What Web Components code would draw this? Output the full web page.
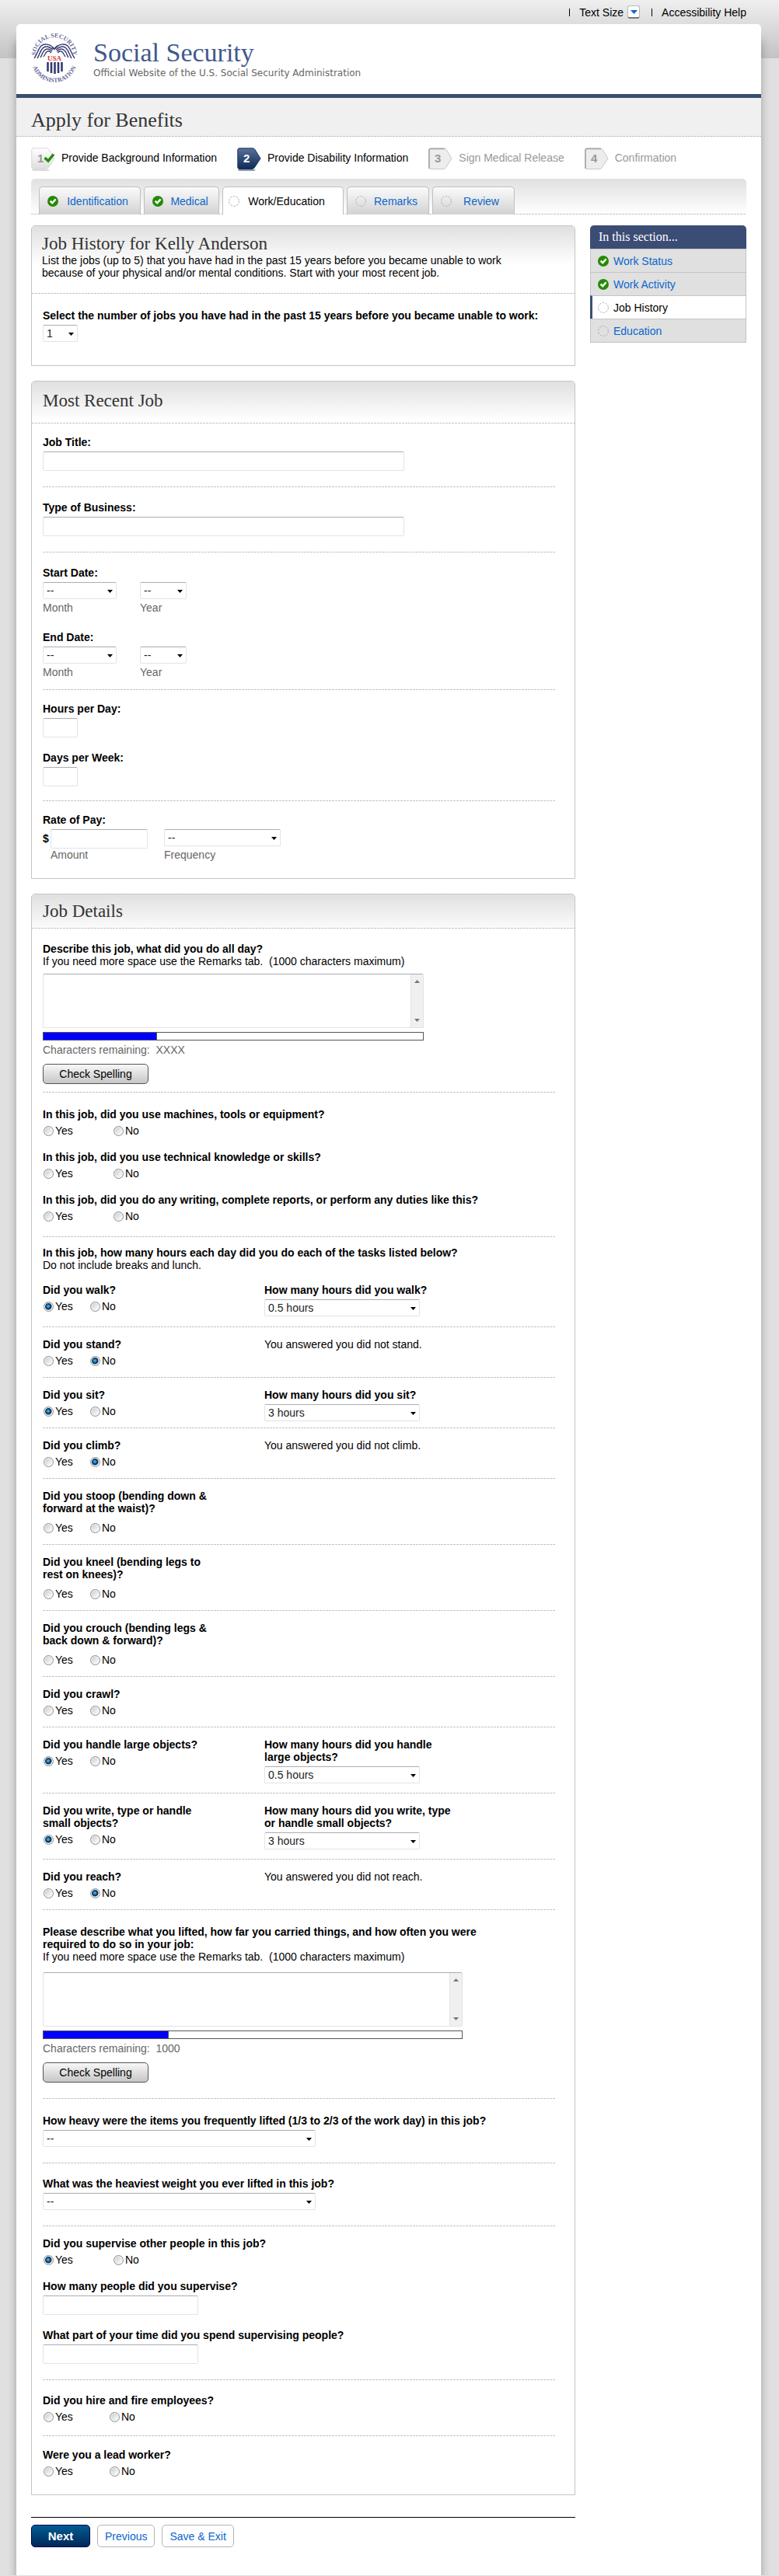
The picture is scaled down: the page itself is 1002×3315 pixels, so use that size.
<!DOCTYPE html>
<html lang="en">
<head>
<meta charset="utf-8">
<title>Apply for Benefits - Job History</title>
<style>
    body
    {
        margin: 0;
        font: 14px/16px "Liberation Sans", Arial, sans-serif;
        color: #000;
        background: linear-gradient(#efefef, #c3c3c3) 0 0 / 100% 75px no-repeat #e0e0e0;

        --serif: "Liberation Serif", Georgia, serif;
        --navy: #3b4c75;
        --link: #0a66cc;
        --line: #c4c4c4;
        --dashes: repeating-linear-gradient(90deg, #c4c4c4 0 3px, transparent 3px 4px);
    }
</style>
</head>
<body>

<page-tools></page-tools>

<page-card>
    <site-header slot="header" name="Social Security" tagline="Official Website of the U.S. Social Security Administration"></site-header>
    <page-title slot="header">Apply for Benefits</page-title>

    <step-list slot="nav">
        <step-item num="1" state="done">Provide Background Information</step-item>
        <step-item num="2" state="current">Provide Disability Information</step-item>
        <step-item num="3" state="todo">Sign Medical Release</step-item>
        <step-item num="4" state="todo">Confirmation</step-item>
    </step-list>

    <tab-bar slot="nav">
        <tab-item done style="width: 131px">Identification</tab-item>
        <tab-item done style="width: 97px">Medical</tab-item>
        <tab-item active style="width: 156px">Work/Education</tab-item>
        <tab-item style="width: 106px">Remarks</tab-item>
        <tab-item style="width: 106px">Review</tab-item>
    </tab-bar>

    <form-panel heading="Job History for Kelly Anderson" size="intro">
        <span slot="intro">List the jobs (up to 5) that you have had in the past 15 years before you became unable to work<br>because of your physical and/or mental conditions. Start with your most recent job.</span>
        <form-group style="--pad: 20px 0 30px">
            <select-field label="Select the number of jobs you have had in the past 15 years before you became unable to work:" value="1" width="45"></select-field>
        </form-group>
    </form-panel>

    <form-panel heading="Most Recent Job" size="tall">
        <form-group style="--pad: 16px 0 20px">
            <text-field label="Job Title:" width="465"></text-field>
        </form-group>
        <form-group style="--pad: 18px 0 20px">
            <text-field label="Type of Business:" width="465"></text-field>
        </form-group>
        <form-group style="--pad: 18px 0 14px; --gap: 22px">
            <date-field label="Start Date:"></date-field>
            <date-field label="End Date:"></date-field>
        </form-group>
        <form-group style="--pad: 16px 0 18px; --gap: 18px">
            <text-field label="Hours per Day:" width="45"></text-field>
            <text-field label="Days per Week:" width="45"></text-field>
        </form-group>
        <form-group style="--pad: 16px 0 22px">
            <pay-field label="Rate of Pay:"></pay-field>
        </form-group>
    </form-panel>

    <form-panel heading="Job Details">
        <form-group style="--pad: 18px 0 10px">
            <essay-field label="Describe this job, what did you do all day?" remaining="XXXX" width="490"></essay-field>
        </form-group>
        <form-group style="--pad: 20px 0 18px; --gap: 18px">
            <radio-field label="In this job, did you use machines, tools or equipment?"></radio-field>
            <radio-field label="In this job, did you use technical knowledge or skills?"></radio-field>
            <radio-field label="In this job, did you do any writing, complete reports, or perform any duties like this?"></radio-field>
        </form-group>

        <task-intro>
            In this job, how many hours each day did you do each of the tasks listed below?
            <span slot="note">Do not include breaks and lunch.</span>
        </task-intro>
        <task-row first>
            <radio-field compact label="Did you walk?" value="Yes"></radio-field>
            <select-field slot="answer" label="How many hours did you walk?" value="0.5 hours" width="200"></select-field>
        </task-row>
        <task-row>
            <radio-field compact label="Did you stand?" value="No"></radio-field>
            <span slot="answer">You answered you did not stand.</span>
        </task-row>
        <task-row>
            <radio-field compact label="Did you sit?" value="Yes"></radio-field>
            <select-field slot="answer" label="How many hours did you sit?" value="3 hours" width="200"></select-field>
        </task-row>
        <task-row>
            <radio-field compact label="Did you climb?" value="No"></radio-field>
            <span slot="answer">You answered you did not climb.</span>
        </task-row>
        <task-row lines="2">
            <radio-field compact label="Did you stoop (bending down &amp; forward at the waist)?"></radio-field>
        </task-row>
        <task-row lines="2">
            <radio-field compact label="Did you kneel (bending legs to rest on knees)?"></radio-field>
        </task-row>
        <task-row lines="2">
            <radio-field compact label="Did you crouch (bending legs &amp; back down &amp; forward)?"></radio-field>
        </task-row>
        <task-row>
            <radio-field compact label="Did you crawl?"></radio-field>
        </task-row>
        <task-row lines="2" style="--radio-gap: 5px">
            <radio-field compact label="Did you handle large objects?" value="Yes"></radio-field>
            <select-field slot="answer" label="How many hours did you handle large objects?" value="0.5 hours" width="200"></select-field>
        </task-row>
        <task-row lines="2" style="--radio-gap: 5px">
            <radio-field compact label="Did you write, type or handle small objects?" value="Yes"></radio-field>
            <select-field slot="answer" label="How many hours did you write, type or handle small objects?" value="3 hours" width="200"></select-field>
        </task-row>
        <task-row>
            <radio-field compact label="Did you reach?" value="No"></radio-field>
            <span slot="answer">You answered you did not reach.</span>
        </task-row>

        <form-group style="--pad: 20px 0; --box-gap: 12px">
            <essay-field label="Please describe what you lifted, how far you carried things, and how often you were required to do so in your job:" remaining="1000" width="540"></essay-field>
        </form-group>
        <form-group style="--pad: 20px 0">
            <select-field label="How heavy were the items you frequently lifted (1/3 to 2/3 of the work day) in this job?" value="--" width="351"></select-field>
        </form-group>
        <form-group style="--pad: 18px 0 20px">
            <select-field label="What was the heaviest weight you ever lifted in this job?" value="--" width="351"></select-field>
        </form-group>
        <form-group style="--pad: 14px 0 20px; --gap: 18px">
            <radio-field label="Did you supervise other people in this job?" value="Yes"></radio-field>
            <text-field label="How many people did you supervise?" width="200"></text-field>
            <text-field label="What part of your time did you spend supervising people?" width="200"></text-field>
        </form-group>
        <form-group style="--pad: 18px 0 16px; --radio-column: 85px">
            <radio-field label="Did you hire and fire employees?"></radio-field>
        </form-group>
        <form-group style="--pad: 16px 0 22px; --radio-column: 85px">
            <radio-field label="Were you a lead worker?"></radio-field>
        </form-group>
    </form-panel>

    <form-actions></form-actions>

    <side-nav slot="aside" heading="In this section...">
        <side-item done>Work Status</side-item>
        <side-item done>Work Activity</side-item>
        <side-item active>Job History</side-item>
        <side-item>Education</side-item>
    </side-nav>
</page-card>

<script>

const BASE_CSS = `
    :host, *, *::before, *::after { box-sizing: border-box; }
    :host { display: block; }
    a { color: var(--link); text-decoration: none; }
    input, select, textarea, button { font: inherit; color: inherit; margin: 0; }
`;

const FIELD_CSS = `
    .label { display: block; font-weight: bold; margin-bottom: 4px; }
    .hint { display: block; color: #666; }
    input[type=text], select, textarea
    {
        display: block;
        border: 1px solid #e2e3ea;
        border-top-color: #abadb3;
        border-radius: 2px;
        background: #fff;
        max-width: 100%;
    }
    input[type=text] { height: 25px; padding: 0 4px; }
    .select { display: grid; max-width: 100%; align-items: center; }
    .select > * { grid-area: 1 / 1; }
    .select svg { justify-self: end; margin: 1px 5px 0 0; pointer-events: none; }
    select { appearance: none; width: 100%; height: 22px; padding: 0 16px 0 4px; color: #222; }
`;

const CHECK_ICON = `<svg width="14" height="14" viewBox="0 0 14 14" aria-hidden="true">
    <circle cx="7" cy="7" r="7" fill="#258a05"/>
    <path d="M3.6 6.6 6.2 9.2 10.6 4.4" fill="none" stroke="#fff" stroke-width="2.4"/>
</svg>`;

const EMPTY_ICON = `<svg width="14" height="14" viewBox="0 0 14 14" aria-hidden="true">
    <circle cx="7" cy="7" r="6.4" fill="none" stroke="#b0b0b0" stroke-dasharray="2.6 1.4"/>
</svg>`;


/**
 * Shared base: puts css() and html() of the subclass in an open shadow root.
 */
class BaseElement extends HTMLElement
{
    connectedCallback()
    {
        if(this.shadowRoot) return;
        this.attachShadow({mode: 'open'}).innerHTML = `<style>${BASE_CSS}${this.css()}</style>${this.html()}`;
    }

    attr(name)
    {
        return (this.getAttribute(name) || '').replace(/&/g, '&amp;');
    }

    css() { return ''; }

    html() { return '<slot></slot>'; }
}


function selectBox(id, value, width)
{
    return `<div class="select" style="width:${width}px">
        <select id="${id}"><option>${value}</option></select>
        <svg width="7" height="4" viewBox="0 0 7 4" aria-hidden="true"><path d="M0 0h7L3.5 4z"/></svg>
    </div>`;
}



// PAGE FRAME

class PageTools extends BaseElement
{
    css()
    {
        return `
            nav { display: flex; justify-content: flex-end; align-items: center; height: 31px; padding-right: 42px; }
            i { width: 1px; height: 10px; background: #000; margin: 0 12px 0 15px; }
            a { color: #000; }
            button
            {
                display: grid;
                place-items: center;
                width: 16px;
                height: 17px;
                margin-left: 5px;
                padding: 0;
                border: 1px solid #b9b9b9;
                border-bottom: 2px solid #777;
                border-radius: 3px;
                background: #fff;
            }
        `;
    }

    html()
    {
        return `<nav aria-label="Page tools">
            <i></i><a href="#">Text Size</a>
            <button type="button" aria-label="Choose text size"><svg width="9" height="5" viewBox="0 0 9 5"><path d="M0 0h9L4.5 5z" fill="#0a66cc"/></svg></button>
            <i></i><a href="#">Accessibility Help</a>
        </nav>`;
    }
}
customElements.define('page-tools', PageTools);


class PageCard extends BaseElement
{
    css()
    {
        return `
            :host
            {
                margin: 0 23px 0 21px;
                padding-bottom: 36px;
                background: #fff;
                border-radius: 5px 5px 0 0;
                box-shadow: 0 20px 12px rgba(0, 0, 0, .3);
            }
            .nav { padding: 0 19px; }
            .columns { display: grid; grid-template-columns: minmax(0, 1fr) 201px; gap: 19px; padding: 14px 19px 0; align-items: start; }
            main { display: flex; flex-direction: column; gap: 19px; }
        `;
    }

    html()
    {
        return `<slot name="header"></slot>
            <div class="nav"><slot name="nav"></slot></div>
            <div class="columns">
                <main><slot></slot></main>
                <aside><slot name="aside"></slot></aside>
            </div>`;
    }
}
customElements.define('page-card', PageCard);


class SiteHeader extends BaseElement
{
    css()
    {
        return `
            header { display: flex; align-items: flex-start; gap: 17px; height: 95px; padding: 10px 16px 0; border-bottom: 5px solid var(--navy); }
            h1 { margin: 8px 0 0; font: 34px/38px var(--serif); color: #40588c; }
            p { margin: 0; font: 12px/14px "DejaVu Sans", Verdana, sans-serif; color: #666; }
            svg { overflow: visible; }
            .ring { font: bold 8px var(--serif); fill: #6a6a98; }
            .usa { font: bold 9px var(--serif); fill: #dc3237; }
        `;
    }

    html()
    {
        return `<header>
            <svg width="66" height="68" viewBox="-3 -3 66 68" role="img" aria-label="Seal">
                <defs>
                    <path id="top" d="M6.7 34A24 24 0 1 1 53.3 34"/>
                    <path id="bottom" d="M1 27A29.5 29.5 0 1 0 59 27"/>
                </defs>
                <text class="ring" text-anchor="middle"><textPath href="#top" startOffset="50%">SOCIAL SECURITY</textPath></text>
                <text class="ring" text-anchor="middle"><textPath href="#bottom" startOffset="50%">ADMINISTRATION</textPath></text>
                <g fill="none" stroke="#363c70" stroke-width="1.4">
                    <path d="M29 18C24 12 16 12 13 15 9 19 8 26 4 31"/>
                    <path d="M28 20C23 15 18 15 15 18 11 22 11 27 8 31"/>
                    <path d="M27 22C23 18 20 18 17 21 14 24 14 27 12 30"/>
                    <path d="M26 24C23 21 21 21 19 24L16 29"/>
                    <path d="M31 18C36 12 44 12 47 15 51 19 52 26 56 31"/>
                    <path d="M32 20C37 15 42 15 45 18 49 22 49 27 52 31"/>
                    <path d="M33 22C37 18 40 18 43 21 46 24 46 27 48 30"/>
                    <path d="M34 24C37 21 39 21 41 24L44 29"/>
                    <path d="M27 17 30 19 34 15" stroke-width="2"/>
                </g>
                <text class="usa" x="30" y="34" text-anchor="middle">USA</text>
                <path d="M21.5 36v12M26 36v14M30.500 36v15M35 36v14M39.500 36v12" stroke="#363c70" stroke-width="2.6"/>
            </svg>
            <div>
                <h1>${this.attr('name')}</h1>
                <p>${this.attr('tagline')}</p>
            </div>
        </header>`;
    }
}
customElements.define('site-header', SiteHeader);


class PageTitle extends BaseElement
{
    css()
    {
        return `
            h2
            {
                margin: 0;
                padding: 14px 19px 6px;
                font: 26px/30px var(--serif);
                color: #333;
                background: var(--dashes) 0 100% / 100% 1px no-repeat #f0f0f0;
            }
        `;
    }

    html() { return '<h2><slot></slot></h2>'; }
}
customElements.define('page-title', PageTitle);



// NAVIGATION

class StepList extends BaseElement
{
    css() { return ':host { display: flex; flex-wrap: wrap; gap: 26px; padding: 14px 0 9px; }'; }
}
customElements.define('step-list', StepList);


class StepItem extends BaseElement
{
    css()
    {
        return `
            :host { display: flex; align-items: flex-start; gap: 9px; line-height: 27px; }
            :host([state=todo]) { color: #999; }
            svg { overflow: visible; }
            text { font: bold 15px "Liberation Sans", Arial, sans-serif; }
        `;
    }

    html()
    {
        const paint = {
            done: {fill: 'url(#g)', stroke: '#d8d8d8', text: '#999', from: '#fff', to: '#dedede', foot: '#ddd'},
            current: {fill: 'url(#g)', stroke: '#1c335e', text: '#fff', from: '#5a7197', to: '#0d2a56', foot: '#8e9ab1'},
            todo: {fill: '#ededed', stroke: '#c8c8c8', text: '#999', from: '#fff', to: '#fff', foot: 'none'}
        }[this.getAttribute('state')];
        const tick = this.getAttribute('state') == 'done'
            ? '<path d="M17.500 13 22 17 29 8.500" fill="none" stroke="#258a05" stroke-width="3.4"/>' : '';
        const inset = this.getAttribute('state') == 'todo'
            ? '<path d="M1 27V3.500Q1 1.500 3 1.500H21" fill="none" stroke="#a5a5a5" stroke-width="1.6"/>' : '';

        return `<svg width="30" height="31" viewBox="0 0 30 31" aria-hidden="true">
                <linearGradient id="g" x2="0" y2="1"><stop offset="0" stop-color="${paint.from}"/><stop offset="1" stop-color="${paint.to}"/></linearGradient>
                <path d="M2 30h20l2-2H1z" fill="${paint.foot}"/>
                <path d="M3 .8H20Q22 .8 23 2.500L30 14 22.500 25.500Q21 27.500 19 27.500H3Q.8 27.500.8 25V3Q.8.8 3 .8z" fill="${paint.fill}" stroke="${paint.stroke}"/>
                ${inset}
                <text x="8" y="19" fill="${paint.text}">${this.attr('num')}</text>
                ${tick}
            </svg>
            <span><slot></slot></span>`;
    }
}
customElements.define('step-item', StepItem);


class TabBar extends BaseElement
{
    css()
    {
        return `
            nav
            {
                display: flex;
                gap: 4px;
                height: 46px;
                padding: 10px 10px 0;
                border-radius: 5px 5px 0 0;
                background: var(--dashes) 0 100% / 100% 1px no-repeat, linear-gradient(#e0e0e0, #fff);
            }
        `;
    }

    html() { return '<nav aria-label="Sections"><slot></slot></nav>'; }
}
customElements.define('tab-bar', TabBar);


class TabItem extends BaseElement
{
    css()
    {
        return `
            a
            {
                display: flex;
                align-items: center;
                height: 36px;
                padding: 0 4px 0 10px;
                border: 1px solid #bfbfbf;
                border-bottom: 0;
                border-radius: 5px 5px 0 0;
                background: linear-gradient(#fbfbfb, #d2d2d2);
            }
            span { flex: 1; text-align: center; }
            :host([active]) a { color: #000; background: #fff; padding: 0 12px 0 7px; }
        `;
    }

    html()
    {
        return `<a href="#">${this.hasAttribute('done') ? CHECK_ICON : EMPTY_ICON}<span><slot></slot></span></a>`;
    }
}
customElements.define('tab-item', TabItem);


class SideNav extends BaseElement
{
    css()
    {
        return `
            h3 { margin: 0; padding: 0 11px; font: 16px/30px var(--serif); color: #fff; background: var(--navy); border-radius: 5px 5px 0 0; }
            nav { border-bottom: 1px solid var(--line); }
        `;
    }

    html() { return `<h3>${this.attr('heading')}</h3><nav><slot></slot></nav>`; }
}
customElements.define('side-nav', SideNav);


class SideItem extends BaseElement
{
    css()
    {
        return `
            a
            {
                display: flex;
                align-items: center;
                gap: 6px;
                height: 30px;
                padding-left: 9px;
                border: solid var(--line);
                border-width: 1px 1px 0;
                background: #e0e0e0;
            }
            :host([active]) a { color: #000; background: #fff; padding-left: 7px; border-left: 3px solid var(--navy); }
        `;
    }

    html() { return `<a href="#">${this.hasAttribute('done') ? CHECK_ICON : EMPTY_ICON}<slot></slot></a>`; }
}
customElements.define('side-item', SideItem);



// FORM LAYOUT

class FormPanel extends BaseElement
{
    css()
    {
        return `
            section { border: 1px solid var(--line); border-radius: 5px 5px 0 0; }
            header
            {
                padding: 9px 14px;
                border-radius: 4px 4px 0 0;
                background: var(--dashes) 0 100% / 100% 1px no-repeat, linear-gradient(#e0e0e0, #fff) 0 0 / 100% 50px no-repeat;
            }
            :host([size=tall]) header { padding: 12px 14px 16px; }
            :host([size=intro]) header { padding: 10px 13px 19px; }
            h3 { margin: 0; font: 23px/26px var(--serif); color: #333; }
            .body { padding: 0 24px 0 14px; }
        `;
    }

    html()
    {
        return `<section>
            <header><h3>${this.attr('heading')}</h3><slot name="intro"></slot></header>
            <div class="body"><slot></slot></div>
        </section>`;
    }
}
customElements.define('form-panel', FormPanel);


const RULE_CSS = `
    :host { background: var(--dashes) 0 100% / 100% 1px no-repeat; padding-bottom: 1px; }
    :host(:last-child) { background: none; padding-bottom: 0; }
`;

class FormGroup extends BaseElement
{
    css() { return `${RULE_CSS} div { display: flex; flex-direction: column; gap: var(--gap, 0); padding: var(--pad); }`; }

    html() { return '<div><slot></slot></div>'; }
}
customElements.define('form-group', FormGroup);


class TaskIntro extends BaseElement
{
    css() { return ':host { padding-top: 12px; } b { display: block; }'; }

    html() { return '<b><slot></slot></b><slot name="note"></slot>'; }
}
customElements.define('task-intro', TaskIntro);


class TaskRow extends BaseElement
{
    css()
    {
        return `${RULE_CSS}
            :host { display: grid; grid-template-columns: 225px minmax(0, 250px); column-gap: 60px; align-items: start; padding-top: 14px; min-height: 65px; --radio-column: 60px; }
            :host([first]) { padding-top: 16px; min-height: 72px; }
            :host([lines="2"]) { min-height: 85px; --radio-gap: 9px; }
        `;
    }

    html() { return '<slot></slot><slot name="answer"></slot>'; }
}
customElements.define('task-row', TaskRow);



// FIELDS

class TextField extends BaseElement
{
    css() { return FIELD_CSS; }

    html()
    {
        return `<label class="label" for="f">${this.attr('label')}</label>
            <input type="text" id="f" style="width:${this.attr('width')}px">`;
    }
}
customElements.define('text-field', TextField);


class SelectField extends BaseElement
{
    css() { return FIELD_CSS; }

    html()
    {
        return `<label class="label" for="f">${this.attr('label')}</label>
            ${selectBox('f', this.attr('value'), this.attr('width'))}`;
    }
}
customElements.define('select-field', SelectField);


class DateField extends BaseElement
{
    css()
    {
        return `${FIELD_CSS}
            .row { display: flex; gap: 30px; }
            .hint { margin-top: 3px; }
        `;
    }

    html()
    {
        return `<div role="group" aria-labelledby="l">
            <span class="label" id="l">${this.attr('label')}</span>
            <div class="row">
                <div>${selectBox('month', '--', 95)}<label class="hint" for="month">Month</label></div>
                <div>${selectBox('year', '--', 60)}<label class="hint" for="year">Year</label></div>
            </div>
        </div>`;
    }
}
customElements.define('date-field', DateField);


class PayField extends BaseElement
{
    css()
    {
        return `${FIELD_CSS}
            .row { display: grid; grid-template-columns: 10px 125px 1fr; column-gap: 0; align-items: start; }
            .row b { line-height: 25px; }
            .frequency { margin-left: 21px; }
        `;
    }

    html()
    {
        return `<div role="group" aria-labelledby="l">
            <span class="label" id="l">${this.attr('label')}</span>
            <div class="row">
                <b>$</b>
                <input type="text" id="amount" style="width:125px">
                <div class="frequency">${selectBox('freq', '--', 150)}</div>
                <span></span>
                <label class="hint" for="amount">Amount</label>
                <label class="hint frequency" for="freq">Frequency</label>
            </div>
        </div>`;
    }
}
customElements.define('pay-field', PayField);


class RadioField extends BaseElement
{
    css()
    {
        return `
            fieldset { margin: 0; padding: 0; border: 0; min-width: 0; }
            legend { padding: 0 0 var(--radio-gap, 5px); font-weight: bold; }
            .row { display: flex; padding-left: 1px; }
            label { display: flex; align-items: center; gap: 2px; }
            label:first-child { width: var(--radio-column, 90px); }
            input
            {
                appearance: none;
                width: 13px;
                height: 13px;
                border: 1px solid #8e8f8f;
                border-radius: 50%;
                background: linear-gradient(135deg, #c3c7cc, #f6f6f6 75%);
                box-shadow: inset 0 0 0 1px #f4f4f4;
            }
            input:checked { background: radial-gradient(circle at 5px 5px, #5fc4e5 0, #1b7ab0 2px, #0c3560 3px, #0c3560 4px, #d8dde2 5px); }
        `;
    }

    html()
    {
        const value = this.getAttribute('value');
        const radio = name => `<label><input type="radio" name="answer" value="${name}"${value == name ? ' checked' : ''}>${name}</label>`;

        return `<fieldset>
            <legend>${this.attr('label')}</legend>
            <div class="row">${radio('Yes')}${radio('No')}</div>
        </fieldset>`;
    }
}
customElements.define('radio-field', RadioField);


class EssayField extends BaseElement
{
    css()
    {
        return `${FIELD_CSS}
            .label { margin: 0; max-width: 590px; }
            .box { display: flex; height: 70px; margin-top: var(--box-gap, 8px); border: 1px solid #e2e3ea; border-top-color: #abadb3; border-radius: 2px; }
            textarea { flex: 1; height: 100%; border: 0; padding: 2px 4px; resize: none; overflow: hidden; }
            .rail { display: flex; flex-direction: column; justify-content: space-between; align-items: center; width: 16px; padding: 7px 0; background: #f0f0f0; border-left: 1px solid #e3e3e3; }
            progress { display: block; appearance: none; width: 100%; height: 11px; margin-top: 5px; border: 1px solid #555; background: #fff; }
            progress::-webkit-progress-bar { background: #fff; }
            progress::-webkit-progress-value { background: #00f; border-right: 1px solid #555; }
            .hint { margin-top: 4px; }
            button
            {
                display: block;
                width: 136px;
                height: 26px;
                margin-top: 10px;
                padding: 0;
                border: 1px solid #555;
                border-radius: 5px;
                background: linear-gradient(#f8f8f8, #c6c6c6);
            }
        `;
    }

    html()
    {
        return `<label class="label" for="f">${this.attr('label')}</label>
            If you need more space use the Remarks tab.&nbsp; (1000 characters maximum)
            <div style="width:${this.attr('width')}px">
                <div class="box">
                    <textarea id="f"></textarea>
                    <div class="rail" aria-hidden="true">
                        <svg width="7" height="4" viewBox="0 0 7 4"><path d="M0 4h7L3.500 0z" fill="#777"/></svg>
                        <svg width="7" height="4" viewBox="0 0 7 4"><path d="M0 0h7L3.500 4z" fill="#777"/></svg>
                    </div>
                </div>
                <progress value="30" max="100" aria-label="Characters used"></progress>
            </div>
            <span class="hint">Characters remaining:&nbsp; ${this.attr('remaining')}</span>
            <button type="button">Check Spelling</button>`;
    }
}
customElements.define('essay-field', EssayField);


class FormActions extends BaseElement
{
    css()
    {
        return `
            :host { display: flex; gap: 9px; margin-top: 9px; padding-top: 9px; border-top: 1px solid #000; }
            button { height: 29px; padding: 0 9px; border: 1px solid #b4b4b4; border-radius: 5px; color: var(--link); background: #fff; }
            .next { width: 76px; font-weight: bold; font-size: 15px; color: #fff; border-color: #000052; background: linear-gradient(#005c94, #002758); }
        `;
    }

    html()
    {
        return `<button type="submit" class="next">Next</button>
            <button type="button">Previous</button>
            <button type="button">Save &amp; Exit</button>`;
    }
}
customElements.define('form-actions', FormActions);

</script>
</body>
</html>
